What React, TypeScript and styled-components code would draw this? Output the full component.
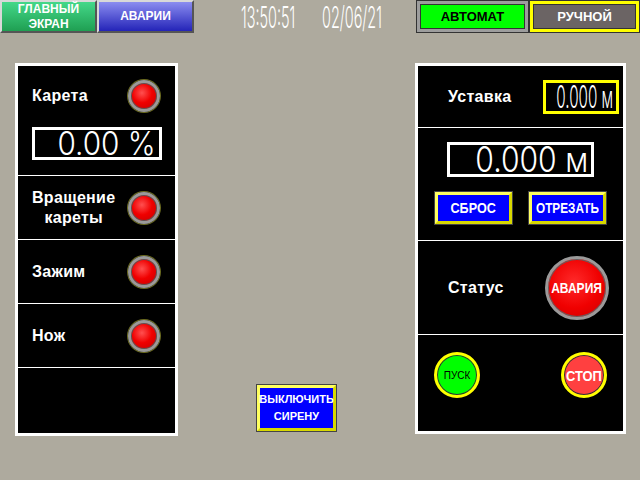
import styled, { createGlobalStyle } from 'styled-components';

const GlobalStyle = createGlobalStyle`
  html, body {
    margin: 0;
    padding: 0;
    background: #aeaa9e;
  }
  body {
    font-family: "Liberation Sans", Arial, sans-serif;
  }
`;

export default function App() {
  return (
    <>
      <GlobalStyle />
      <Screen>
        <TopBar>
          <NavButton $top='#44d889' $bottom='#1f9f52' $width={97}>ГЛАВНЫЙ<br />ЭКРАН</NavButton>
          <NavButton $top='#8a8cf0' $bottom='#2424b8' $width={97}>АВАРИИ</NavButton>
          <Clock>
            <ClockSlot><Digits $size={30} $scale={0.48} $origin='left'>13:50:51</Digits></ClockSlot>
            <ClockSlot><Digits $size={30} $scale={0.48} $origin='left'>02/06/21</Digits></ClockSlot>
          </Clock>
          <ModeFrame $frame='#9d9d9d' $width={113}>
            <ModeInner $bg='#00ff00' $fg='#000'>АВТОМАТ</ModeInner>
          </ModeFrame>
          <ModeFrame $frame='#ffff00' $width={111}>
            <ModeInner $bg='#6b6464' $fg='#fff'>РУЧНОЙ</ModeInner>
          </ModeFrame>
        </TopBar>

        <Main>
          <LeftPanel>
            <FirstRow>
              <LabelLine>
                <Label>Карета</Label>
                <Led />
              </LabelLine>
              <ValueBox $width={130} $height={33} $color='#fff'>
                <Digits $size={32} $scale={0.93}>0.00 %</Digits>
              </ValueBox>
            </FirstRow>
            <Row $height={64}>
              <Label $center>Вращение<br />кареты</Label>
              <Led />
            </Row>
            <Row $height={64}>
              <Label>Зажим</Label>
              <Led />
            </Row>
            <Row $height={64}>
              <Label>Нож</Label>
              <Led />
            </Row>
            <Filler />
          </LeftPanel>

          <Middle>
            <FrameButton $width={81} $height={48} $font={11}>ВЫКЛЮЧИТЬ<br />СИРЕНУ</FrameButton>
          </Middle>

          <RightPanel>
            <SplitRow $height={62} $pad='0 4px 0 30px'>
              <Label>Уставка</Label>
              <ValueBox $width={76} $height={34} $color='#ffff00'>
                <Digits $size={31} $scale={0.49}>0.000 м</Digits>
              </ValueBox>
            </SplitRow>
            <CounterRow>
              <ValueBox $width={147} $height={35} $color='#fff'>
                <Digits $size={35} $scale={0.86}>0.000 м</Digits>
              </ValueBox>
              <ButtonPair>
                <FrameButton $width={79} $height={34} $font={14}>
                  <Squeeze $scale={0.9}>СБРОС</Squeeze>
                </FrameButton>
                <FrameButton $width={79} $height={34} $font={14}>
                  <Squeeze $scale={0.84}>ОТРЕЗАТЬ</Squeeze>
                </FrameButton>
              </ButtonPair>
            </CounterRow>
            <SplitRow $height={94} $pad='0 14px 0 30px'>
              <Label>Статус</Label>
              <AlarmLamp><Squeeze $scale={0.86}>АВАРИЯ</Squeeze></AlarmLamp>
            </SplitRow>
            <ControlRow>
              <RoundButton $bg='#00ff00' $fg='#000' $font={10}>ПУСК</RoundButton>
              <RoundButton $bg='#ff4040' $fg='#fff' $font={15} $bold>
                <Squeeze $scale={0.86}>СТОП</Squeeze>
              </RoundButton>
            </ControlRow>
          </RightPanel>
        </Main>
      </Screen>
    </>
  );
}

const Screen = styled.div`
  width: 640px;
  height: 480px;
  display: flex;
  flex-direction: column;
  overflow: hidden;
`;

const TopBar = styled.div`
  display: flex;
  height: 33px;
`;

const NavButton = styled.div<{ $top: string, $bottom: string, $width: number }>`
  width: ${p => p.$width}px;
  box-sizing: border-box;
  border: 2px solid;
  border-color: #d8d8d8 #555 #555 #d8d8d8;
  background: linear-gradient(${p => p.$top}, ${p => p.$bottom});
  color: #fff;
  font-size: 12px;
  font-weight: 700;
  line-height: 15px;
  text-align: center;
  display: flex;
  align-items: center;
  justify-content: center;
`;

const Clock = styled.div`
  width: 222px;
  box-sizing: border-box;
  padding-left: 47px;
  display: flex;
  align-items: center;
  gap: 19px;
`;

const ClockSlot = styled.span`
  width: 62px;
  display: flex;
  overflow: visible;
`;

const Digits = styled.span<{ $size: number, $scale: number, $origin?: string }>`
  display: inline-block;
  flex-shrink: 0;
  font-family: Inter, "DejaVu Sans", sans-serif;
  font-weight: 300;
  font-size: ${p => p.$size}px;
  line-height: 1;
  white-space: pre;
  color: #fff;
  transform: scaleX(${p => p.$scale});
  transform-origin: ${p => p.$origin || 'right'} center;
`;

const Squeeze = styled.span<{ $scale: number }>`
  display: inline-block;
  white-space: nowrap;
  transform: scaleX(${p => p.$scale});
  margin: 0 -8px;
`;

const ModeFrame = styled.div<{ $frame: string, $width: number }>`
  width: ${p => p.$width}px;
  box-sizing: border-box;
  border: 1px solid #333;
  background: ${p => p.$frame};
  padding: 3px;
  display: flex;
`;

const ModeInner = styled.div<{ $bg: string, $fg: string }>`
  flex: 1;
  border: 1px solid #333;
  background: ${p => p.$bg};
  color: ${p => p.$fg};
  font-size: 13px;
  font-weight: 700;
  display: flex;
  align-items: center;
  justify-content: center;
`;

const Main = styled.div`
  display: grid;
  grid-template-columns: 163px 237px 211px;
  align-items: start;
  padding: 30px 0 0 15px;
`;

const Panel = styled.div`
  box-sizing: border-box;
  border: 3px solid #fff;
  background: #000;
  display: flex;
  flex-direction: column;
`;

const LeftPanel = styled(Panel)`
  height: 373px;
`;

const RightPanel = styled(Panel)`
  height: 371px;
`;

const Row = styled.div<{ $height: number }>`
  height: ${p => p.$height}px;
  box-sizing: border-box;
  border-bottom: 1px solid #fff;
  display: flex;
  align-items: center;
  justify-content: space-between;
  padding: 0 15px 0 14px;
`;

const FirstRow = styled.div`
  height: 110px;
  box-sizing: border-box;
  border-bottom: 1px solid #fff;
  padding: 14px 15px 0 14px;
  display: flex;
  flex-direction: column;
`;

const LabelLine = styled.div`
  display: flex;
  align-items: center;
  justify-content: space-between;
  height: 32px;
  margin-bottom: 15px;
`;

const Filler = styled.div`
  flex: 1;
`;

const Label = styled.div<{ $center?: boolean }>`
  color: #fff;
  font-size: 16px;
  font-weight: 700;
  line-height: 20px;
  letter-spacing: 0.3px;
  text-align: ${p => p.$center ? 'center' : 'left'};
`;

const Led = styled.div`
  width: 32px;
  height: 32px;
  box-sizing: border-box;
  border-radius: 50%;
  border: 3px solid #9a9a9a;
  box-shadow: 0 0 0 1px #6b6b20, inset 0 0 0 1px #555;
  background: radial-gradient(circle at 42% 38%, #ff5050 0%, #f00000 45%, #c00000 100%);
`;

const ValueBox = styled.div<{ $width: number, $height: number, $color: string }>`
  width: ${p => p.$width}px;
  height: ${p => p.$height}px;
  box-sizing: border-box;
  border: 3px solid ${p => p.$color};
  background: #000;
  display: flex;
  align-items: center;
  justify-content: flex-end;
  padding-right: 3px;
`;

const Middle = styled.div`
  height: 369px;
  display: flex;
  align-items: flex-end;
  padding-left: 78px;
`;

const FrameButton = styled.div<{ $width: number, $height: number, $font: number }>`
  width: ${p => p.$width}px;
  height: ${p => p.$height}px;
  box-sizing: border-box;
  border: 4px solid;
  border-color: #ffff60 #d8d800 #d8d800 #ffff60;
  outline: 1px solid #444;
  outline-offset: -1px;
  background: #0000ff;
  color: #fff;
  font-size: ${p => p.$font}px;
  font-weight: 700;
  line-height: ${p => p.$font + 6}px;
  text-align: center;
  display: flex;
  align-items: center;
  justify-content: center;
  white-space: nowrap;
`;

const SplitRow = styled.div<{ $height: number, $pad: string }>`
  height: ${p => p.$height}px;
  box-sizing: border-box;
  border-bottom: 1px solid #fff;
  display: flex;
  align-items: center;
  justify-content: space-between;
  padding: ${p => p.$pad};
`;

const CounterRow = styled.div`
  height: 113px;
  box-sizing: border-box;
  border-bottom: 1px solid #fff;
  display: flex;
  flex-direction: column;
  align-items: center;
  padding-top: 14px;
  gap: 14px;
`;

const ButtonPair = styled.div`
  display: flex;
  gap: 15px;
`;

const AlarmLamp = styled.div`
  width: 64px;
  height: 64px;
  box-sizing: border-box;
  border-radius: 50%;
  border: 3px solid #9a9a9a;
  box-shadow: inset 0 0 0 1px #606060;
  background: radial-gradient(circle at 45% 40%, #ff2a2a 0%, #f00000 55%, #c80000 100%);
  color: #fff;
  font-size: 14px;
  font-weight: 700;
  display: flex;
  align-items: center;
  justify-content: center;
`;

const ControlRow = styled.div`
  flex: 1;
  display: flex;
  justify-content: space-between;
  align-items: flex-start;
  padding: 17px 16px 0 16px;
`;

const RoundButton = styled.div<{ $bg: string, $fg: string, $font: number, $bold?: boolean }>`
  width: 46px;
  height: 46px;
  box-sizing: border-box;
  border-radius: 50%;
  border: 3px solid #ffff00;
  box-shadow: inset 0 0 0 1px #333;
  background: ${p => p.$bg};
  color: ${p => p.$fg};
  font-size: ${p => p.$font}px;
  font-weight: ${p => p.$bold ? 700 : 400};
  display: flex;
  align-items: center;
  justify-content: center;
`;
